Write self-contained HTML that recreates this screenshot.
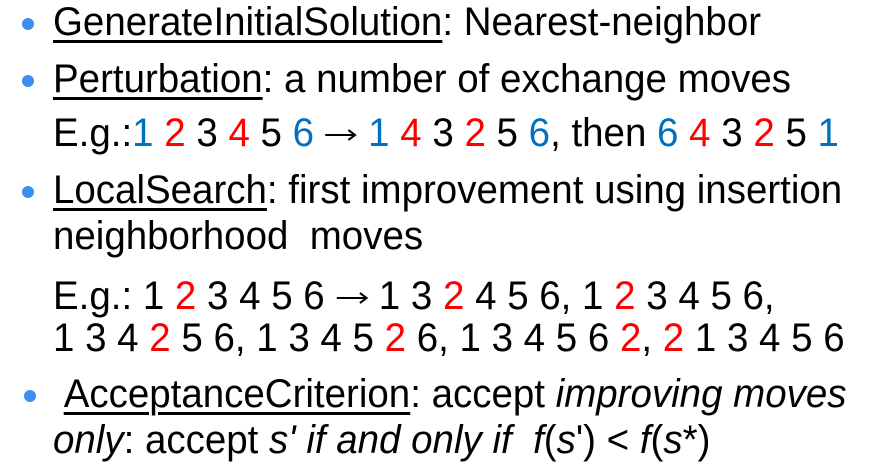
<!DOCTYPE html>
<html><head><meta charset="utf-8"><style>
html,body{margin:0;padding:0;background:#fff;width:872px;height:466px;overflow:hidden}
.l{position:absolute;left:53px;font-family:"Liberation Sans",Arial,sans-serif;font-size:40px;line-height:44px;height:44px;color:#000;white-space:nowrap;transform:scaleX(0.962);transform-origin:0 50%}
.b{position:absolute;width:12px;height:12px;border-radius:50%;background:#3d8ef0;left:22px}
u{text-decoration-thickness:3px;text-underline-offset:5px}
.r{color:#f00}.c{color:#0070c0}
.a{display:inline-block;width:34px;height:14px;vertical-align:4px}
</style></head><body>
<div class="b" style="top:18px"></div>
<div class="l" style="top:0px">
<u>GenerateInitialSolution</u>: Nearest-neighbor</div>
<div class="b" style="top:75px"></div>
<div class="l" style="top:57px"><u>Perturbation</u>: a number of exchange moves</div>
<div class="l" style="top:111px">E.g.:<span class="c">1</span> <span class="r">2</span> 3 <span class="r">4</span> 5 <span class="c">6</span> <svg class="a" viewBox="0 0 34 14"><path d="M1 7H32M25 2L32 7L25 12" stroke="#000" stroke-width="2" fill="none"/></svg> <span class="c">1</span> <span class="r">4</span> 3 <span class="r">2</span> 5 <span class="c">6</span>, then <span class="c">6</span> <span class="r">4</span> 3 <span class="r">2</span> 5 <span class="c">1</span></div>
<div class="b" style="top:186px"></div>
<div class="l" style="top:168px"><u>LocalSearch</u>: first improvement using insertion</div>
<div class="l" style="top:214px">neighborhood&nbsp; moves</div>
<div class="l" style="top:274px">E.g.: 1 <span class="r">2</span> 3 4 5 6 <svg class="a" viewBox="0 0 34 14"><path d="M1 7H32M25 2L32 7L25 12" stroke="#000" stroke-width="2" fill="none"/></svg> 1 3 <span class="r">2</span> 4 5 6, 1 <span class="r">2</span> 3 4 5 6,</div>
<div class="l" style="top:316px">1 3 4 <span class="r">2</span> 5 6, 1 3 4 5 <span class="r">2</span> 6, 1 3 4 5 6 <span class="r">2</span>, <span class="r">2</span> 1 3 4 5 6</div>
<div class="b" style="top:390px;left:24px"></div>
<div class="l" style="top:372px">&nbsp;<u>AcceptanceCriterion</u>: accept <i>improving moves</i></div>
<div class="l" style="top:418px"><i>only</i>: accept <i>s' if and only if&nbsp; f</i>(<i>s</i>') &lt; <i>f</i>(<i>s</i>*)</div>
</body></html>
